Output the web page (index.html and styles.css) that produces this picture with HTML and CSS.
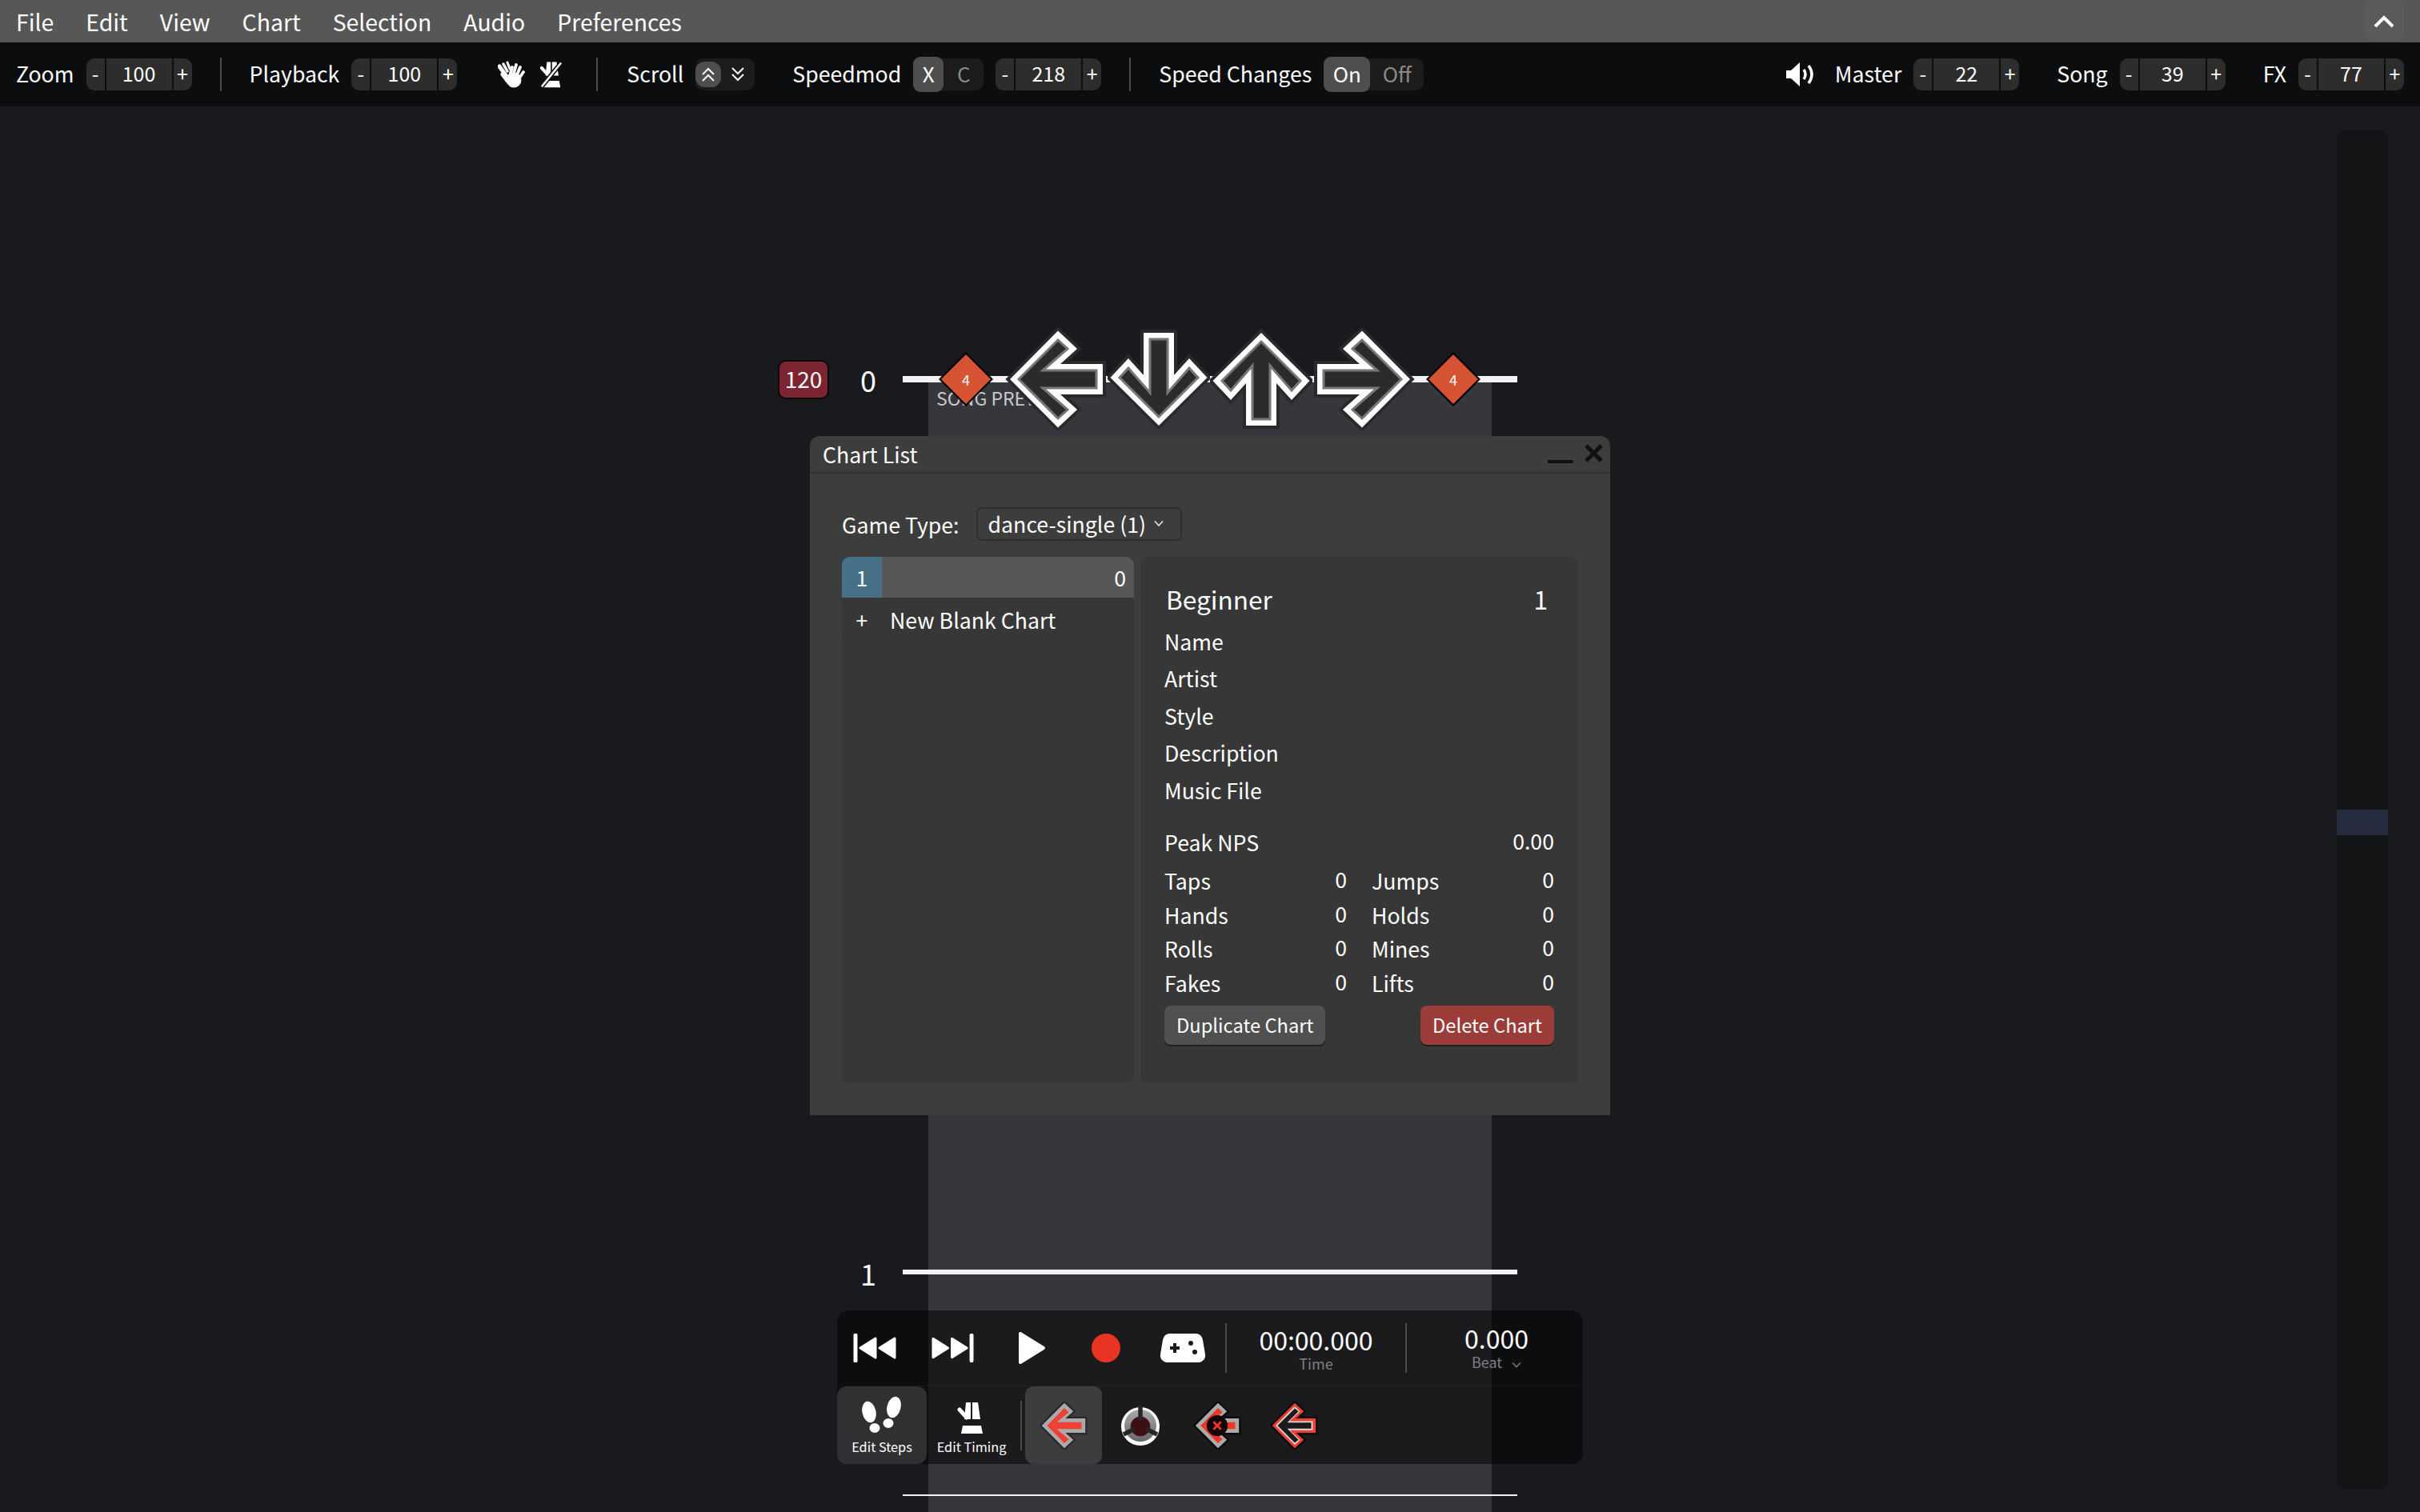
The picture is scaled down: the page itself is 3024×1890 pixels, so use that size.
FILE: index.html
```html
<!DOCTYPE html>
<html lang="en">
<head>
    <meta charset="UTF-8">
    <title>Chart Editor</title>
    <link rel="stylesheet" href="styles.css">
</head>
<body>
    <svg class="defs" width="0" height="0">
        <defs>
            <symbol id="note-shape" viewBox="0 0 128 128">
                <path d="M6 64 L66 3.5 L90 26 L69 45 H122 V83 H69 L90 102 L66 124.5 Z" fill="#fff" stroke="#2a2a2c" stroke-width="8" paint-order="stroke"/>
                <path d="M17 64 L66 15 L78 26 L47 53 H114 V75 H47 L78 102 L66 113 Z" fill="#2b2b2b" stroke="#777" stroke-width="3"/>
            </symbol>
            <symbol id="metronome" viewBox="0 0 36 42">
                <path d="M11 2 H17 V23 H9 Z M19 2 H26 L29 23 H19 Z" fill="#fff"/>
                <path d="M7 31 H30 L32 41 H5 Z" fill="#fff"/>
                <path d="M3 11 L12 21" stroke="#fff" stroke-width="5" stroke-linecap="round"/>
            </symbol>
        </defs>
    </svg>

    <nav class="menu-bar">
        <span>File</span>
        <span>Edit</span>
        <span>View</span>
        <span>Chart</span>
        <span>Selection</span>
        <span>Audio</span>
        <span>Preferences</span>
        <button class="collapse">
            <svg width="26" height="16" viewBox="0 0 26 16"><path d="M2 14 L13 3 L24 14" fill="none" stroke="#fff" stroke-width="4"/></svg>
        </button>
    </nav>

    <div class="toolbar">
        <div class="tool-group">
            <span>Zoom</span>
            <div class="spinner"><i>-</i><b>100</b><i>+</i></div>
        </div>
        <div class="tool-sep"></div>
        <div class="tool-group">
            <span>Playback</span>
            <div class="spinner"><i>-</i><b>100</b><i>+</i></div>
        </div>
        <svg class="icon-clap" width="34" height="34" viewBox="0 0 34 34">
            <g stroke="#fff" stroke-linecap="round" fill="none">
                <path d="M10 18 L2 7" stroke-width="5"/>
                <path d="M12 13 L7 4" stroke-width="3.5"/>
                <path d="M15 10 L12 2" stroke-width="3"/>
                <path d="M15 19 L18 8" stroke-width="3.8"/>
                <path d="M19 19 L23 5" stroke-width="3.8"/>
                <path d="M23 20 L28 8" stroke-width="3.8"/>
                <path d="M26 23 L32 14" stroke-width="3.8"/>
                <path d="M12 25 L6 17" stroke-width="5"/>
            </g>
            <ellipse cx="20" cy="24" rx="9.5" ry="9.5" fill="#fff"/>
            <path d="M14 31 Q8 29 6 22" fill="none" stroke="#0c0d0f" stroke-width="1.2"/>
        </svg>
        <svg class="icon-metro-off" width="30" height="34" viewBox="0 0 36 42">
            <use href="#metronome"/>
            <path d="M33 3 L3 40" stroke="#0c0d0f" stroke-width="7"/>
            <path d="M33 3 L3 40" stroke="#fff" stroke-width="3"/>
        </svg>
        <div class="tool-sep tool-sep-near"></div>
        <div class="tool-group">
            <span>Scroll</span>
            <div class="toggle toggle-scroll">
                <em class="active">
                    <svg width="18" height="20" viewBox="0 0 18 20"><path d="M2 10 L9 3 L16 10 M2 18 L9 11 L16 18" fill="none" stroke="#fff" stroke-width="2"/></svg>
                </em>
                <em>
                    <svg width="18" height="20" viewBox="0 0 18 20"><path d="M2 2 L9 9 L16 2 M2 10 L9 17 L16 10" fill="none" stroke="#fff" stroke-width="2"/></svg>
                </em>
            </div>
        </div>
        <div class="tool-group tool-speedmod">
            <span>Speedmod</span>
            <div class="toggle toggle-mod"><em class="active">X</em><em>C</em></div>
            <div class="spinner"><i>-</i><b>218</b><i>+</i></div>
        </div>
        <div class="tool-sep"></div>
        <div class="tool-group">
            <span>Speed Changes</span>
            <div class="toggle toggle-speed"><em class="active">On</em><em>Off</em></div>
        </div>
        <div class="tool-right">
            <svg class="icon-speaker" width="36" height="30" viewBox="0 0 36 30">
                <path d="M0 10 H6 L17 0 V30 L6 20 H0 Z" fill="#fff"/>
                <path d="M22 9 Q26 15 22 21 M28 4 Q36 15 28 26" fill="none" stroke="#fff" stroke-width="3.5"/>
            </svg>
            <div class="tool-group">
                <span>Master</span>
                <div class="spinner"><i>-</i><b>22</b><i>+</i></div>
            </div>
            <div class="tool-group">
                <span>Song</span>
                <div class="spinner"><i>-</i><b>39</b><i>+</i></div>
            </div>
            <div class="tool-group">
                <span>FX</span>
                <div class="spinner"><i>-</i><b>77</b><i>+</i></div>
            </div>
        </div>
    </div>

    <main class="canvas">
        <div class="waveform">
            <div class="song-preview">SONG PREVIEW</div>
        </div>

        <div class="beat-line beat-line-first"></div>
        <div class="beat-line beat-line-second"></div>
        <div class="beat-line beat-line-third"></div>
        <div class="measure measure-first">0</div>
        <div class="measure measure-second">1</div>
        <div class="bpm-badge">120</div>

        <div class="diamond diamond-left"><span>4</span></div>
        <div class="diamond diamond-right"><span>4</span></div>

        <svg class="receptor receptor-left" width="128" height="128"><use href="#note-shape"/></svg>
        <svg class="receptor receptor-down" width="128" height="128"><use href="#note-shape"/></svg>
        <svg class="receptor receptor-up" width="128" height="128"><use href="#note-shape"/></svg>
        <svg class="receptor receptor-right" width="128" height="128"><use href="#note-shape"/></svg>

        <section class="window">
            <header class="window-title">
                <span>Chart List</span>
                <svg width="70" height="30" viewBox="0 0 70 30">
                    <path d="M1 24 H30" stroke="#111" stroke-width="4" stroke-linecap="round"/>
                    <path d="M48 4 L67 23 M67 4 L48 23" stroke="#111" stroke-width="5"/>
                </svg>
            </header>
            <div class="window-body">
                <div class="game-type">
                    <span>Game Type:</span>
                    <div class="dropdown">
                        dance-single (1)
                        <svg width="12" height="9" viewBox="0 0 12 9"><path d="M1 1.5 L6 7 L11 1.5" fill="none" stroke="#ddd" stroke-width="1.8"/></svg>
                    </div>
                </div>
                <div class="chart-panels">
                    <div class="chart-list">
                        <div class="chart-row chart-row-active"><span class="chart-num">1</span><span class="chart-val">0</span></div>
                        <div class="chart-row chart-row-new"><span class="chart-num">+</span><span>New Blank Chart</span></div>
                    </div>
                    <div class="chart-info">
                        <div class="info-head"><span>Beginner</span><span>1</span></div>
                        <div class="info-line">Name</div>
                        <div class="info-line">Artist</div>
                        <div class="info-line">Style</div>
                        <div class="info-line">Description</div>
                        <div class="info-line">Music File</div>
                        <div class="stat stat-peak"><span>Peak NPS</span><span>0.00</span></div>
                        <div class="stat-grid">
                            <div class="stat"><span>Taps</span><span>0</span></div>
                            <div class="stat"><span>Jumps</span><span>0</span></div>
                            <div class="stat"><span>Hands</span><span>0</span></div>
                            <div class="stat"><span>Holds</span><span>0</span></div>
                            <div class="stat"><span>Rolls</span><span>0</span></div>
                            <div class="stat"><span>Mines</span><span>0</span></div>
                            <div class="stat"><span>Fakes</span><span>0</span></div>
                            <div class="stat"><span>Lifts</span><span>0</span></div>
                        </div>
                        <div class="info-buttons">
                            <button class="btn">Duplicate Chart</button>
                            <button class="btn btn-danger">Delete Chart</button>
                        </div>
                    </div>
                </div>
            </div>
        </section>

        <div class="timeline"></div>
        <div class="timeline-thumb"></div>

        <section class="playbar">
            <div class="transport">
                <svg class="t-back" width="55" height="36" viewBox="0 0 55 36">
                    <g fill="#fff" stroke="#fff" stroke-width="3" stroke-linejoin="round">
                        <path d="M3 2 V34" stroke-width="5" stroke-linecap="round"/>
                        <path d="M9 18 L28 6 V30 Z"/>
                        <path d="M33 18 L52 6 V30 Z"/>
                    </g>
                </svg>
                <svg class="t-next" width="54" height="36" viewBox="0 0 55 36">
                    <g fill="#fff" stroke="#fff" stroke-width="3" stroke-linejoin="round">
                        <path d="M52 2 V34" stroke-width="5" stroke-linecap="round"/>
                        <path d="M46 18 L27 6 V30 Z"/>
                        <path d="M22 18 L3 6 V30 Z"/>
                    </g>
                </svg>
                <svg class="t-play" width="35" height="42" viewBox="0 0 35 42">
                    <path d="M3 3 L32 21 L3 39 Z" fill="#fff" stroke="#fff" stroke-width="4" stroke-linejoin="round"/>
                </svg>
                <div class="t-record"></div>
                <svg class="t-pad" width="56" height="36" viewBox="0 0 56 36">
                    <path d="M12 0 H44 C50 0 52 4 53 8 L56 26 C57 32 52 36 47 36 H9 C4 36 -1 32 0 26 L3 8 C4 4 6 0 12 0 Z" fill="#fff"/>
                    <path d="M18 12 V24 M12 18 H24" stroke="#1b1b1e" stroke-width="4"/>
                    <circle cx="38" cy="12" r="3" fill="#1b1b1e"/>
                    <circle cx="43" cy="23" r="3" fill="#1b1b1e"/>
                </svg>
                <div class="readout readout-time">
                    <strong>00:00.000</strong>
                    <small>Time</small>
                </div>
                <div class="readout readout-beat">
                    <strong>0.000</strong>
                    <small>Beat
                        <svg width="12" height="8" viewBox="0 0 12 8"><path d="M1 1.5 L6 6.5 L11 1.5" fill="none" stroke="#777" stroke-width="1.6"/></svg>
                    </small>
                </div>
            </div>
            <div class="tools">
                <div class="tab tab-active">
                    <svg width="52" height="48" viewBox="0 0 52 48">
                        <g fill="#fff">
                            <ellipse cx="10" cy="20" rx="8.5" ry="13.5" transform="rotate(-12 10 20)"/>
                            <ellipse cx="17" cy="40" rx="6.5" ry="6"/>
                            <ellipse cx="41" cy="14" rx="8.5" ry="13.5" transform="rotate(14 41 14)"/>
                            <ellipse cx="34" cy="34" rx="6.5" ry="6"/>
                        </g>
                    </svg>
                    <span>Edit Steps</span>
                </div>
                <div class="tab">
                    <svg width="36" height="42" viewBox="0 0 36 42"><use href="#metronome"/></svg>
                    <span>Edit Timing</span>
                </div>
                <div class="tool-sep tools-sep"></div>
                <div class="note-tile note-tile-active">
                    <svg width="60" height="60" viewBox="0 0 128 128">
                        <path d="M6 64 L66 3.5 L90 26 L69 45 H122 V83 H69 L90 102 L66 124.5 Z" fill="#aaa" stroke="#2a2a2c" stroke-width="10" paint-order="stroke"/>
                        <path d="M20 64 L66 17 L78 28 L46 55 H112 V73 H46 L78 100 L66 111 Z" fill="#ee4035"/>
                    </svg>
                </div>
                <div class="note-tile">
                    <svg width="60" height="60" viewBox="0 0 60 60">
                        <defs>
                            <linearGradient id="mine-grad" x1="0" y1="0" x2="0" y2="1">
                                <stop offset="0" stop-color="#aaa"/>
                                <stop offset="1" stop-color="#666"/>
                            </linearGradient>
                        </defs>
                        <circle cx="30" cy="31" r="24" fill="#fff"/>
                        <circle cx="30" cy="30" r="20" fill="url(#mine-grad)"/>
                        <circle cx="30" cy="31" r="12" fill="#3c1010" stroke="#551414"/>
                        <path d="M30 5 V23 M9 41 L23 34 M51 41 L37 34" stroke="#262626" stroke-width="5.5"/>
                    </svg>
                </div>
                <div class="note-tile">
                    <svg width="60" height="60" viewBox="0 0 128 128">
                        <path d="M6 64 L66 3.5 L90 26 L69 45 H122 V83 H69 L90 102 L66 124.5 Z" fill="#aaa" stroke="#0a0a0a" stroke-width="10" paint-order="stroke"/>
                        <path d="M20 64 L66 17 L78 28 L46 55 H112 V73 H46 L78 100 L66 111 Z" fill="#ee3526"/>
                        <circle cx="64" cy="64" r="28" fill="#120606"/>
                        <path d="M54 54 L74 74 M74 54 L54 74" stroke="#ee3526" stroke-width="6"/>
                    </svg>
                </div>
                <div class="note-tile">
                    <svg width="60" height="60" viewBox="0 0 128 128">
                        <path d="M6 64 L66 3.5 L90 26 L69 45 H122 V83 H69 L90 102 L66 124.5 Z" fill="#ee4035" stroke="#0a0a0a" stroke-width="10" paint-order="stroke"/>
                        <path d="M15 64 L66 13 L80 26 L52 52 H114 V76 H52 L80 102 L66 115 Z" fill="#e8d8d8"/>
                        <path d="M20 64 L66 18 L76 26 L46 56 H110 V72 H46 L76 102 L66 110 Z" fill="#1b1b1e"/>
                    </svg>
                </div>
            </div>
        </section>
    </main>
</body>
</html>
```

FILE: styles.css
```css
* {
    box-sizing: border-box;
}

html, body {
    margin: 0;
    padding: 0;
}

body {
    width: 3024px;
    height: 1890px;
    overflow: hidden;
    display: flex;
    flex-direction: column;
    background-color: #191a1e;
    color: #fff;
    font-family: "Noto Sans CJK JP", "Noto Sans", sans-serif;
    font-size: 26.7px;
}

.defs {
    position: absolute;
}

/* top menu */
.menu-bar {
    height: 53px;
    flex: none;
    display: flex;
    align-items: center;
    gap: 40px;
    padding-left: 20px;
    background-color: #575757;
    font-size: 28.4px;
}

.collapse {
    margin-left: auto;
    margin-right: 20px;
    align-self: flex-start;
    width: 50px;
    height: 50px;
    padding: 6px 0 0;
    border: none;
    border-radius: 10px;
    background: rgba(255, 255, 255, 0.02);
}

/* toolbar */
.toolbar {
    height: 80px;
    flex: none;
    display: flex;
    align-items: center;
    padding-left: 20px;
    background-color: #0c0d0f;
}

.tool-group {
    display: flex;
    align-items: center;
    gap: 15px;
}

.tool-group > span {
    padding-bottom: 3px;
}

.tool-speedmod {
    margin-left: 47px;
}

.tool-sep {
    width: 2px;
    height: 42px;
    margin: 0 35px;
    background-color: #4b4b4b;
}

.tool-sep-near {
    margin-left: 41px;
    margin-right: 36px;
}

.icon-clap {
    margin-left: 51px;
}

.icon-metro-off {
    margin-left: 18px;
}

.spinner {
    width: 132px;
    height: 40px;
    display: flex;
    align-items: stretch;
    border-radius: 10px;
    background-color: #2d2d2d;
    font-size: 25px;
    line-height: 37px;
    text-align: center;
}

.spinner i {
    width: 23px;
    font-style: normal;
}

.spinner b {
    flex: 1;
    font-weight: 400;
    border-left: 2px solid #0c0d0f;
    border-right: 2px solid #0c0d0f;
}

.toggle {
    height: 40px;
    display: flex;
    align-items: center;
    border-radius: 10px;
    background-color: #1c1c1c;
    font-size: 26px;
}

.toggle em {
    height: 44px;
    display: flex;
    align-items: center;
    justify-content: center;
    padding-bottom: 3px;
    font-style: normal;
    color: #8a8a8a;
    border-radius: 9px;
}

.toggle em.active {
    background-color: #4e4e4e;
    color: #fff;
}

.toggle-scroll {
    width: 74px;
}

.toggle-scroll em {
    width: 32px;
    height: 32px;
    padding-bottom: 0;
    border-radius: 12px;
}

.toggle-scroll em + em {
    width: 42px;
}

.toggle-mod {
    width: 88px;
}

.toggle-mod em {
    width: 38px;
}

.toggle-mod em + em {
    width: 50px;
}

.toggle-speed {
    width: 125px;
}

.toggle-speed em {
    width: 58px;
}

.toggle-speed em + em {
    width: 67px;
}

.tool-right {
    margin-left: auto;
    margin-right: 20px;
    display: flex;
    align-items: center;
    gap: 47px;
}

.icon-speaker {
    margin-right: -22px;
}

/* chart canvas */
.canvas {
    position: relative;
    flex: 1;
}

.waveform {
    position: absolute;
    left: 1160px;
    top: 342px;
    bottom: 0;
    width: 704px;
    background-color: #36373d;
}

.song-preview {
    padding: 5px 0 0 10px;
    font-size: 23px;
    color: #c9c9cd;
}

.beat-line {
    position: absolute;
    left: 1128px;
    width: 768px;
    background-color: #f2f2f6;
}

.beat-line-first {
    top: 337px;
    height: 8px;
}

.beat-line-second {
    top: 1454px;
    height: 6px;
}

.beat-line-third {
    top: 1735px;
    height: 2px;
}

.measure {
    position: absolute;
    left: 1075px;
    font-size: 36px;
    line-height: 40px;
}

.measure-first {
    top: 321px;
}

.measure-second {
    top: 1438px;
}

.bpm-badge {
    position: absolute;
    left: 972px;
    top: 317px;
    width: 64px;
    height: 49px;
    border: 2px solid #0a0a0a;
    border-radius: 10px;
    background-color: #7c2431;
    font-size: 28px;
    line-height: 43px;
    text-align: center;
}

.diamond {
    position: absolute;
    top: 307px;
    width: 68px;
    height: 68px;
    display: flex;
    align-items: center;
    justify-content: center;
    background-color: #000;
    clip-path: polygon(50% 0, 100% 50%, 50% 100%, 0 50%);
}

.diamond::before {
    content: "";
    position: absolute;
    inset: 3px;
    background-color: #d65433;
    clip-path: polygon(50% 0, 100% 50%, 50% 100%, 0 50%);
}

.diamond span {
    position: relative;
    font-size: 18px;
}

.diamond-left {
    left: 1173px;
}

.diamond-right {
    left: 1782px;
}

.receptor {
    position: absolute;
    top: 277px;
}

.receptor-left {
    left: 1256px;
}

.receptor-down {
    left: 1384px;
    transform: rotate(-90deg);
}

.receptor-up {
    left: 1512px;
    transform: rotate(90deg);
}

.receptor-right {
    left: 1640px;
    transform: rotate(180deg);
}

/* chart list window */
.window {
    position: absolute;
    left: 1012px;
    top: 412px;
    width: 1000px;
    height: 849px;
    border-radius: 12px 12px 0 0;
    background-color: #3d3d3d;
}

.window-title {
    height: 47px;
    display: flex;
    align-items: center;
    justify-content: space-between;
    padding: 0 8px 0 16px;
    border-bottom: 2px solid #323232;
}

.window-body {
    padding: 42px 40px 0;
}

.game-type {
    height: 42px;
    display: flex;
    align-items: center;
    gap: 21px;
}

.dropdown {
    width: 257px;
    height: 42px;
    display: flex;
    align-items: center;
    gap: 10px;
    padding-left: 13px;
    padding-bottom: 2px;
    border: 2px solid #2e2e2e;
    border-radius: 7px;
    white-space: nowrap;
}

.chart-panels {
    display: flex;
    gap: 8px;
    margin-top: 20px;
    height: 658px;
}

.chart-list {
    width: 365px;
    border-radius: 10px;
    background-color: #373737;
    overflow: hidden;
}

.chart-row {
    height: 52px;
    display: flex;
    align-items: center;
    padding-top: 3px;
}

.chart-num {
    width: 50px;
    text-align: center;
}

.chart-row-active {
    justify-content: space-between;
    height: 51px;
    padding-top: 0;
    background-color: #575757;
    padding-right: 10px;
}

.chart-row-active .chart-num {
    height: 100%;
    line-height: 52px;
    background-color: #466f88;
}

.chart-row-new {
    border-bottom: 1px solid #333;
    gap: 10px;
}

.chart-info {
    flex: 1;
    padding: 32px 30px 0;
    border-radius: 10px;
    background-color: #373737;
}

.info-head {
    height: 44px;
    display: flex;
    justify-content: space-between;
    align-items: center;
    padding: 0 8px 4px 2px;
    margin-bottom: 7px;
    font-size: 31.6px;
}

.info-line {
    height: 46.4px;
    line-height: 46px;
}

.stat {
    height: 42.6px;
    display: flex;
    justify-content: space-between;
    align-items: center;
}

.stat-peak {
    margin-top: 20px;
    margin-bottom: 6px;
}

.stat span + span {
    padding-bottom: 4px;
}

.stat-grid {
    display: grid;
    grid-template-columns: 228px 228px;
    grid-auto-rows: 42.4px;
    column-gap: 31px;
}

.info-buttons {
    display: flex;
    justify-content: space-between;
    margin-top: 8px;
}

.btn {
    height: 49px;
    padding: 0 15px 2px;
    border: none;
    border-radius: 8px;
    background-color: #505050;
    box-shadow: 0 2px 0 #1f1f1f;
    color: #fff;
    font-family: inherit;
    font-size: 23.7px;
}

.btn-danger {
    background-color: #9c3c38;
}

/* right timeline */
.timeline {
    position: absolute;
    left: 2920px;
    top: 30px;
    width: 64px;
    height: 1698px;
    border-radius: 10px;
    background-color: #131415;
}

.timeline-thumb {
    position: absolute;
    left: 2920px;
    top: 879px;
    width: 64px;
    height: 32px;
    background-color: #252d3f;
}

/* bottom play bar */
.playbar {
    position: absolute;
    left: 1046px;
    top: 1505px;
    width: 932px;
    height: 192px;
    border-radius: 14px;
    background-color: rgba(0, 0, 0, 0.5);
}

.transport {
    height: 95px;
    display: flex;
    align-items: center;
    padding-left: 20px;
    border-bottom: 1px solid rgba(255, 255, 255, 0.04);
}

.t-next {
    margin-left: 42px;
}

.t-play {
    margin-left: 55px;
}

.t-record {
    width: 36px;
    height: 36px;
    margin-left: 57px;
    border-radius: 50%;
    background-color: #e93323;
}

.t-pad {
    margin-left: 50px;
}

.readout {
    height: 62px;
    display: flex;
    flex-direction: column;
    align-items: center;
    color: #fff;
}

.readout strong {
    font-weight: 400;
    font-size: 32px;
    line-height: 40px;
}

.readout small {
    font-size: 18px;
    line-height: 20px;
    color: #808080;
}

.readout small svg {
    margin-left: 8px;
}

.readout-time {
    width: 227px;
    margin-left: 25px;
    border-left: 2px solid #4b4b4b;
    border-right: 2px solid #4b4b4b;
}

.readout-beat {
    width: 220px;
    padding-left: 4px;
    margin-top: -4px;
}

.tools {
    height: 97px;
    display: flex;
    align-items: stretch;
}

.tab {
    width: 112px;
    display: flex;
    flex-direction: column;
    align-items: center;
    justify-content: flex-end;
    padding-bottom: 10px;
    border-radius: 12px;
    font-size: 16.3px;
    line-height: 24px;
}

.tab svg {
    margin-bottom: 3px;
}

.tab-active {
    background-color: #303033;
}

.tools-sep {
    align-self: center;
    height: 62px;
    margin: 0 4px 0 5px;
}

.note-tile {
    width: 96px;
    display: flex;
    align-items: center;
    justify-content: center;
    border-radius: 10px;
}

.note-tile-active {
    background-color: #3d3d40;
}
```
